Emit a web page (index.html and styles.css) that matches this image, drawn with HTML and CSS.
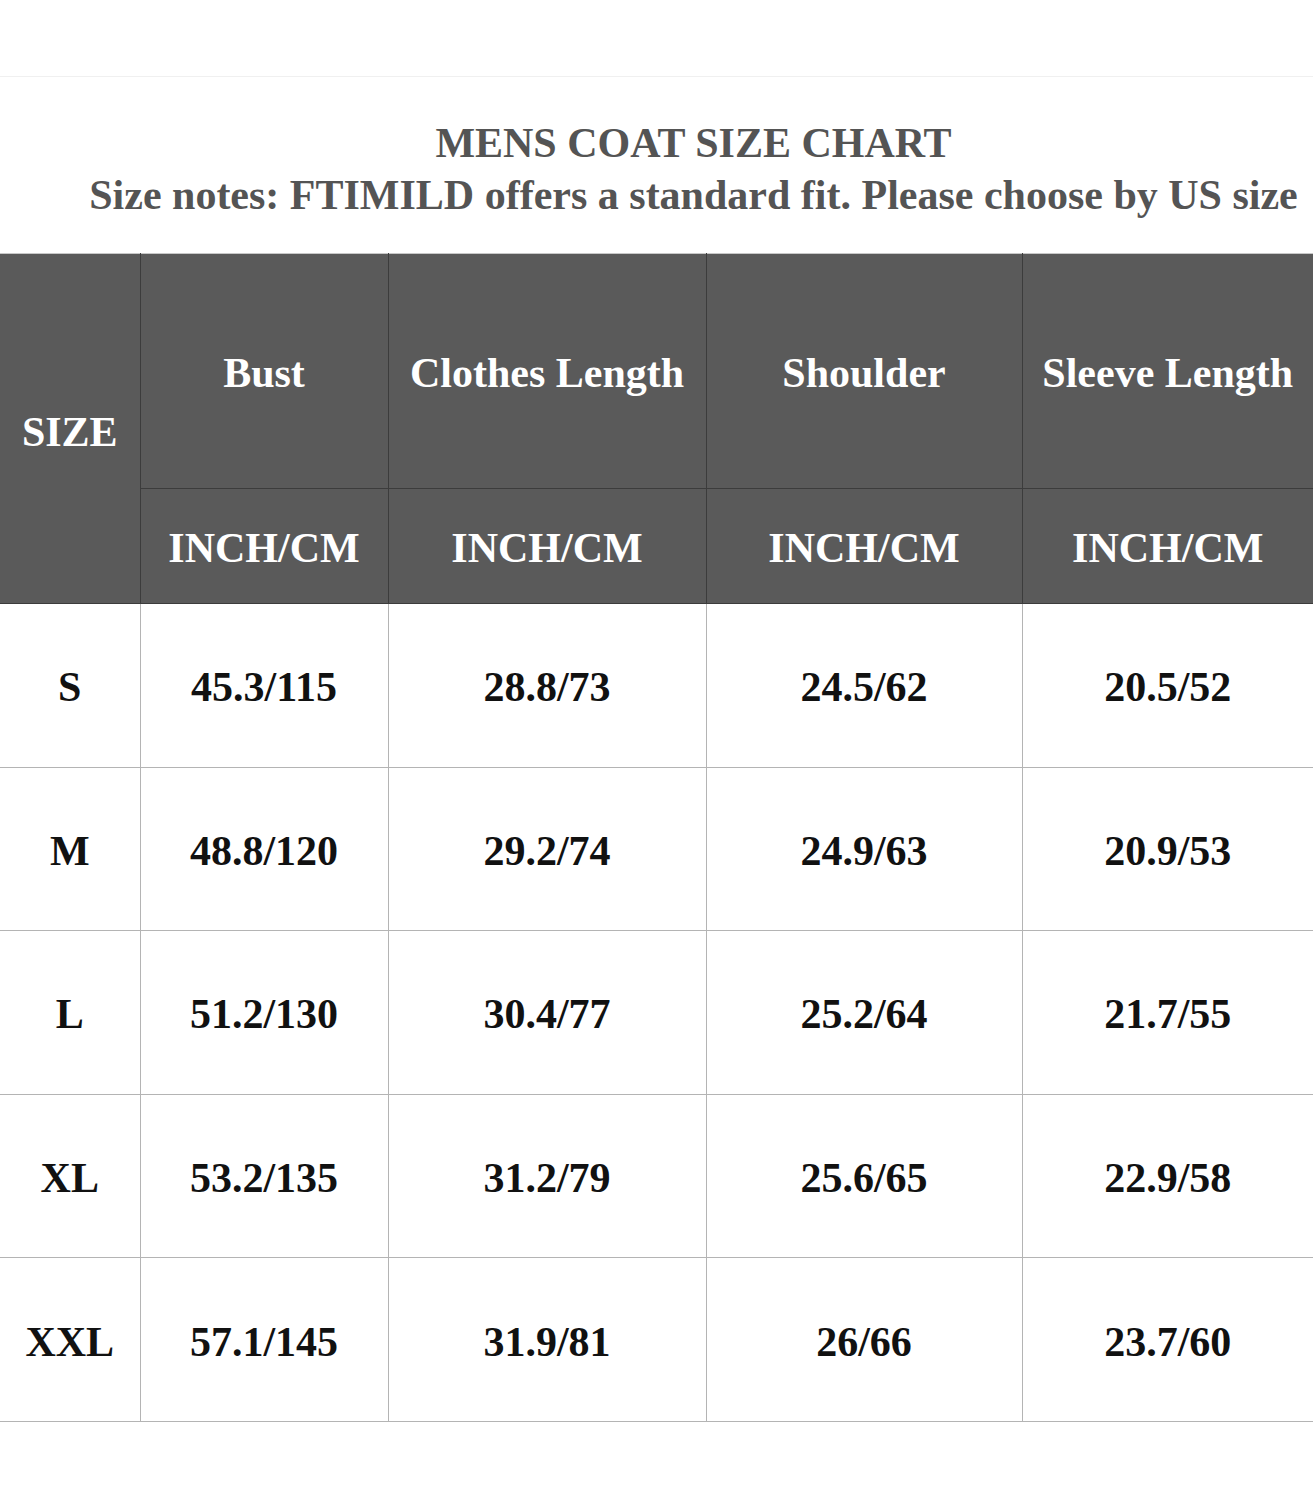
FILE: index.html
```html
<!DOCTYPE html>
<html>
<head>
<meta charset="utf-8">
<link rel="stylesheet" href="styles.css">
</head>
<body>
<div class="topline"></div>
<div class="heading">
  <div class="title">MENS COAT SIZE CHART</div>
  <div class="subtitle">Size notes: FTIMILD offers a standard fit. Please choose by US size</div>
</div>
<table class="chart">
  <colgroup>
    <col class="c0"><col class="c1"><col class="c2"><col class="c3"><col class="c4">
  </colgroup>
  <thead>
    <tr class="h1">
      <th rowspan="2" class="sizeh">SIZE</th>
      <th>Bust</th>
      <th>Clothes Length</th>
      <th>Shoulder</th>
      <th>Sleeve Length</th>
    </tr>
    <tr class="h2">
      <th>INCH/CM</th>
      <th>INCH/CM</th>
      <th>INCH/CM</th>
      <th>INCH/CM</th>
    </tr>
  </thead>
  <tbody>
    <tr><td>S</td><td>45.3/115</td><td>28.8/73</td><td>24.5/62</td><td>20.5/52</td></tr>
    <tr><td>M</td><td>48.8/120</td><td>29.2/74</td><td>24.9/63</td><td>20.9/53</td></tr>
    <tr><td>L</td><td>51.2/130</td><td>30.4/77</td><td>25.2/64</td><td>21.7/55</td></tr>
    <tr><td>XL</td><td>53.2/135</td><td>31.2/79</td><td>25.6/65</td><td>22.9/58</td></tr>
    <tr><td>XXL</td><td>57.1/145</td><td>31.9/81</td><td>26/66</td><td>23.7/60</td></tr>
  </tbody>
</table>
</body>
</html>
```

FILE: styles.css
```css
html, body {
  margin: 0;
  padding: 0;
  background: #ffffff;
}
body {
  width: 1313px;
  height: 1500px;
  overflow: hidden;
  font-family: "Liberation Serif", "Times New Roman", serif;
  font-weight: bold;
}
.topline {
  height: 77px;
  border-bottom: 1px solid #f0f0f0;
  box-sizing: border-box;
}
.heading {
  height: 176px;
  padding-left: 74px;
  text-align: center;
  color: #545454;
  box-sizing: border-box;
  padding-top: 40px;
}
.title {
  font-size: 42px;
  line-height: 52px;
}
.subtitle {
  font-size: 42px;
  line-height: 52px;
  white-space: nowrap;
}
.chart {
  width: 1313px;
  table-layout: fixed;
  border-collapse: collapse;
  border-top: 1px solid #c8c8c8;
}
.c0 { width: 140px; }
.c1 { width: 248px; }
.c2 { width: 318px; }
.c3 { width: 316px; }
.c4 { width: 291px; }
.chart th, .chart td {
  padding: 0;
  text-align: center;
  font-size: 42px;
  font-weight: bold;
}
.chart th {
  background: #5a5a5a;
  color: #ffffff;
  border: 1px solid #3c3c3c;
}
.chart th.sizeh {
  border-left: none;
  padding-top: 6px;
}
.h1 th { height: 230px; padding-top: 4px; }
.h2 th { height: 110px; padding-top: 4px; }
.chart tr > :last-child { border-right: none; }
.chart td {
  color: #111111;
  height: 158.6px;
  padding-top: 4px;
  border: 1px solid #b4b4b4;
}
.chart td:first-child { border-left: none; }
.chart thead th { border-top: none; }
.chart tbody tr:first-child td { border-top: none; }
```
